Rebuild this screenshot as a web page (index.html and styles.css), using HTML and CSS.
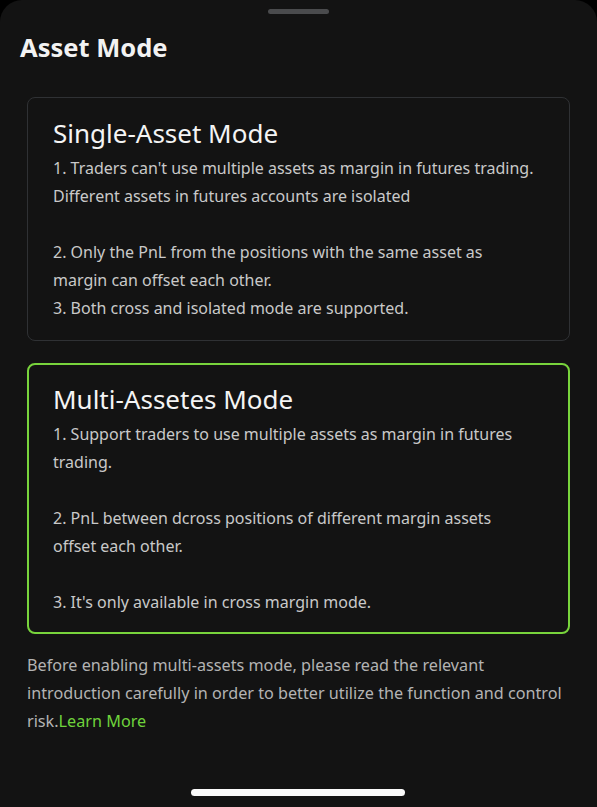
FILE: index.html
```html
<!DOCTYPE html>
<html lang="en">
<head>
<meta charset="utf-8">
<title>Asset Mode</title>
<link rel="stylesheet" href="styles.css">
</head>
<body>
<div class="sheet">
  <div class="handle"></div>
  <h1 class="title">Asset Mode</h1>
  <div class="card">
    <h2 class="card-title">Single-Asset Mode</h2>
    <p class="item">1. Traders can't use multiple assets as margin in futures trading.<br>Different assets in futures accounts are isolated</p>
    <p class="item gap">2. Only the PnL from the positions with the same asset as<br>margin can offset each other.</p>
    <p class="item">3. Both cross and isolated mode are supported.</p>
  </div>
  <div class="card selected">
    <h2 class="card-title">Multi-Assetes Mode</h2>
    <p class="item">1. Support traders to use multiple assets as margin in futures<br>trading.</p>
    <p class="item gap">2. PnL between dcross positions of different margin assets<br>offset each other.</p>
    <p class="item gap">3. It's only available in cross margin mode.</p>
  </div>
  <p class="note">Before enabling multi-assets mode, please read the relevant<br>introduction carefully in order to better utilize the function and control<br>risk.<a class="link" href="#">Learn More</a></p>
  <div class="home-bar"></div>
</div>
</body>
</html>
```
FILE: styles.css
```css
html, body {
  margin: 0;
  padding: 0;
  background: #000;
}
body {
  width: 597px;
  height: 807px;
  overflow: hidden;
  font-family: "Noto Sans", "Open Sans", sans-serif;
}
.sheet {
  position: relative;
  box-sizing: border-box;
  width: 597px;
  height: 807px;
  background: #131313;
  border-radius: 22px 22px 0 0;
  padding: 9px 27px 0 27px;
  display: flex;
  flex-direction: column;
}
.handle {
  align-self: center;
  width: 61px;
  height: 5px;
  border-radius: 3px;
  background: #4a4b4d;
}
.title {
  margin: 16px 0 0 -7px;
  font-size: 25.5px;
  line-height: 34px;
  font-weight: 700;
  color: #f2f2f2;
}
.card {
  margin-top: 33px;
  border: 1px solid #2f3134;
  border-radius: 8px;
  padding: 18px 25px 18px 25px;
}
.card + .card {
  margin-top: 22px;
}
.card.selected {
  border: 2px solid #78d43c;
  padding: 17px 24px 16px 24px;
}
.card-title {
  margin: 0 0 4px 0;
  font-size: 26px;
  line-height: 34px;
  font-weight: 400;
  color: #f4f4f4;
}
.item {
  margin: 0;
  font-size: 16px;
  line-height: 28px;
  color: #c9c9c9;
  white-space: nowrap;
}
.item.gap {
  margin-top: 28px;
}
.note {
  margin: 17px 0 0 0;
  font-size: 16.2px;
  line-height: 28px;
  color: #b3b3b3;
  white-space: nowrap;
}
.link {
  color: #6fd33c;
  text-decoration: none;
}
.home-bar {
  position: absolute;
  left: 191px;
  bottom: 11px;
  width: 214px;
  height: 7px;
  border-radius: 4px;
  background: #fafafa;
}
```
